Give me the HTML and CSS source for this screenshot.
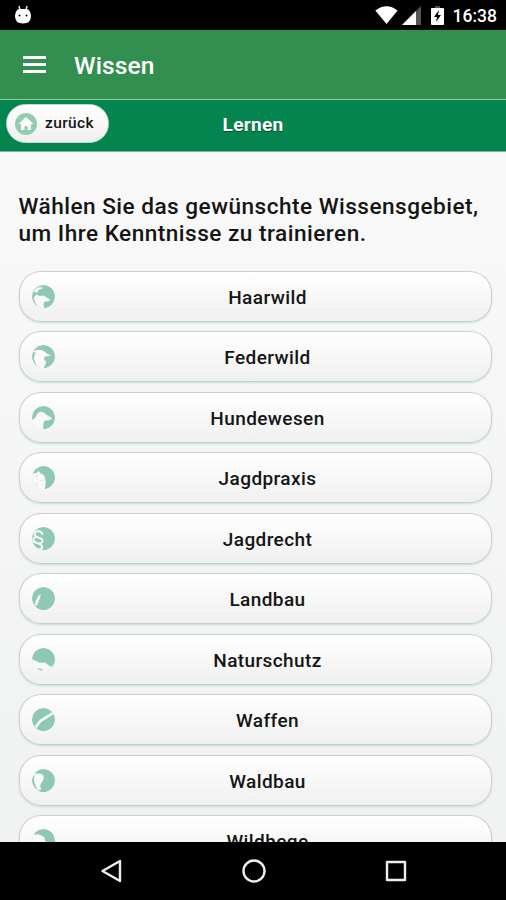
FILE: index.html
```html
<!DOCTYPE html>
<html lang="de">
  <head>
    <meta charset="UTF-8" />
    <meta name="viewport" content="width=device-width, initial-scale=1.0" />
    <title>Wissen - Lernen</title>
    <link rel="stylesheet" href="styles.css">
  </head>
  <body>
    <div class="statusbar">
      <svg class="android" width="18" height="20" viewBox="0 0 18 20">
        <path d="M5 1l1 4M13 1l-1 4" stroke="#ddd" stroke-width="1.6" />
        <path d="M2.500 6Q3 4 6 4h6q3 0 3.500 2Q17 8 17 11q0 7.500-8 7.500T1 11q0-3 1.500-5z" fill="#fff" />
        <circle cx="5.500" cy="10.500" r="1" />
        <circle cx="12.500" cy="10.500" r="1" />
      </svg>
      <div class="status-right">
        <svg class="wifi" width="23" height="18" viewBox="0 0 23 18">
          <path d="M0.300 4.500Q11.500-4 22.700 4.500L11.500 18z" fill="#fff" />
        </svg>
        <svg class="signal" width="19" height="19" viewBox="0 0 19 19">
          <path d="M19 0v19H0z" fill="#555" />
          <path d="M14 5v14H0z" fill="#fff" />
        </svg>
        <svg class="battery" width="13" height="19" viewBox="0 0 13 19">
          <path d="M4 0h5v2H4z" fill="#555" />
          <path d="M1 2h11q1 0 1 1v15q0 1-1 1H1q-1 0-1-1V3q0-1 1-1z" fill="#fff" />
          <path d="M8 4L3 11h3l-1 5 5-7H7z" />
        </svg>
        <span class="time">16:38</span>
      </div>
    </div>

    <header class="appbar">
      <div class="burger"><i></i><i></i><i></i></div>
      <h1>Wissen</h1>
    </header>

    <div class="subbar">
      <a class="back">
        <svg width="22" height="22" viewBox="0 0 22 22">
          <circle cx="11" cy="11" r="11" fill="#94cbb5" />
          <path d="M11 4l7.500 7H16v6h-3.500v-4h-3v4H6v-6H3.500z" fill="#fff" />
        </svg>
        <span>zurück</span>
      </a>
      <h2>Lernen</h2>
    </div>

    <main>
      <p class="intro">Wählen Sie das gewünschte Wissensgebiet,<br>um Ihre Kenntnisse zu trainieren.</p>
      <nav class="topics">
        <a class="topic">
          <svg viewBox="0 0 24 24">
            <circle cx="12" cy="12" r="12" />
            <path class="cut" d="M2.500 12L5 10l3 1.500 4-.500 4 2.500 3 2-2 1.500-4 .500q-2 3 0 6l-5 1-4-5-2-4z" />
            <path class="cut" d="M2 7l3 1 2-3 5-2-4-1-4 2z" />
          </svg>
          <span>Haarwild</span>
        </a>
        <a class="topic">
          <svg viewBox="0 0 24 24">
            <circle cx="12" cy="12" r="12" />
            <path class="cut" d="M0 7l4-1.500Q8 4 12 6q2 1.500 3 2.500l5 2.500-6 1q-2 .500-1 4 3 1 1 4l-2 4.500H8L4 20 2 14Q2 10 4 8z" />
          </svg>
          <span>Federwild</span>
        </a>
        <a class="topic">
          <svg viewBox="0 0 24 24">
            <circle cx="12" cy="12" r="12" />
            <path class="cut" d="M-1 15Q4 13 5 9q2-4 7-2.500l3 2.500 6 3.500-2 2-6 1q-2 3-1 9H4L-1 20z" />
          </svg>
          <span>Hundewesen</span>
        </a>
        <a class="topic">
          <svg viewBox="0 0 24 24">
            <circle cx="12" cy="12" r="12" />
            <path class="cut" d="M-1 8l6-1 2-2 2 3q3 0 4 3 2 5 1 9l-1 5H2L-1 18z" />
            <path d="M5 9v5M5 17v4M8 15h3" stroke="#c3e2d6" stroke-width=".8" />
          </svg>
          <span>Jagdpraxis</span>
        </a>
        <a class="topic">
          <svg viewBox="0 0 24 24">
            <circle cx="12" cy="12" r="12" />
            <path class="line" d="M11 8Q10 4 6 4.500 2 5 3 8.500q1 2 5 3 4 1.500 2.500 4.500-2 2-6 .500Q0 14 2 11.500 5 9 8.500 12M1 16q1-1 4 .500 6 1.500 5.500 5-1 3-6 1.500" />
          </svg>
          <span>Jagdrecht</span>
        </a>
        <a class="topic">
          <svg viewBox="0 0 24 24">
            <circle cx="12" cy="12" r="12" />
            <path class="cut" d="M9 7Q9 12 4.500 20L3 18Q4 11 9 7z" />
          </svg>
          <span>Landbau</span>
        </a>
        <a class="topic">
          <svg viewBox="0 0 24 24">
            <circle cx="12" cy="12" r="12" />
            <path class="cut" d="M-1 11l4 2L8 15.500l5.500-.500L18 18.500l6 2V25H-1z" />
            <path d="M5 21.500q3-1 7 1.500-4 1-7-1.500z" />
          </svg>
          <span>Naturschutz</span>
        </a>
        <a class="topic">
          <svg viewBox="0 0 24 24">
            <circle cx="12" cy="12" r="12" />
            <path class="cut" d="M3 19q4-7 10-10l9-5 1 2-9 6Q9 14 5 21z" />
          </svg>
          <span>Waffen</span>
        </a>
        <a class="topic">
          <svg viewBox="0 0 24 24">
            <circle cx="12" cy="12" r="12" />
            <path class="cut" d="M-1 7L2 3l3 2q5-1 7 2 1 4-2 7-3 4 0 7l-3 1-2 3-6-5z" />
            <path d="M0 11Q1 7 3 6q-2 6 1 12l2 4Q0 18 0 11z" />
          </svg>
          <span>Waldbau</span>
        </a>
        <a class="topic">
          <svg viewBox="0 0 24 24">
            <circle cx="12" cy="12" r="12" />
            <path class="cut" d="M-1 6l5-.500q5-.500 9 3.500l2 8-1 8H0z" />
          </svg>
          <span>Wildhege</span>
        </a>
      </nav>
    </main>

    <footer class="navbar">
      <svg width="24" height="26" viewBox="0 0 24 26">
        <path d="M2.500 13L20 3v20z" />
      </svg>
      <svg width="26" height="26" viewBox="0 0 26 26">
        <circle cx="13" cy="13" r="10.500" />
      </svg>
      <svg width="24" height="26" viewBox="0 0 24 26">
        <rect x="3" y="4" width="18" height="18" />
      </svg>
    </footer>
  </body>
</html>
```
FILE: styles.css
```css
* {
  box-sizing: border-box;
}
body {
  margin: 0;
  height: 900px;
  display: flex;
  flex-direction: column;
  overflow: hidden;
  font-family: Roboto, Arial, sans-serif;
  font-weight: 500;
  color: #151515;
}
svg {
  display: block;
  flex: none;
}

.statusbar {
  flex: none;
  height: 30px;
  padding: 0 9px 0 14px;
  display: flex;
  justify-content: space-between;
  align-items: center;
  background: #000;
  color: #fff;
}
.android {
  margin-top: -1px;
}
.status-right {
  display: flex;
  align-items: center;
}
.signal {
  margin-left: 4px;
}
.battery {
  margin: 0 9px 0 10px;
}
.time {
  font-size: 17.5px;
  line-height: 30px;
  padding-top: 2px;
}

.appbar {
  flex: none;
  height: 70px;
  padding-left: 23px;
  display: flex;
  align-items: center;
  background: #338f4f;
  border-bottom: 1px solid #8fc5a0;
  color: #fff;
}
.burger {
  width: 23px;
  height: 17px;
  margin: -1px 28px 0 0;
  display: flex;
  flex-direction: column;
  justify-content: space-between;
}
.burger i {
  height: 3px;
  background: #fff;
}
h1 {
  margin: 2px 0 0;
  font-size: 24.5px;
  font-weight: 500;
  letter-spacing: 0.1px;
}

.subbar {
  flex: none;
  height: 52px;
  padding: 0 6px;
  display: grid;
  grid-template-columns: 1fr auto 1fr;
  align-items: center;
  background: #04854f;
  border-bottom: 1px solid #77b99b;
}
.back {
  width: 103px;
  height: 39px;
  margin-top: -4px;
  padding-left: 8px;
  display: flex;
  align-items: center;
  gap: 8px;
  border-radius: 20px;
  background: linear-gradient(#fff, #efefef);
  border: 1px solid #c5ddd1;
  font-size: 15.5px;
  letter-spacing: 0.4px;
}
.back span {
  margin-top: -1px;
}
h2 {
  margin: -2px 0 0;
  font-size: 19px;
  font-weight: 700;
  letter-spacing: 0.3px;
  color: #fff;
  text-shadow: 0 1px 1px #024a2b;
}

main {
  flex: 1;
  min-height: 0;
  overflow: hidden;
  padding: 41px 14.5px 0 18.5px;
  background: linear-gradient(#f9f9f9, #f0f1f1);
}
.intro {
  margin: 0 0 23.6px;
  font-size: 22.6px;
  line-height: 27px;
  letter-spacing: 0.48px;
  white-space: nowrap;
}
.topics {
  display: flex;
  flex-direction: column;
  gap: 9.5px;
}
.topic {
  flex: none;
  height: 51px;
  padding: 0 12px;
  display: grid;
  grid-template-columns: 24px 1fr 0;
  align-items: center;
  border: 1px solid #cbd0ce;
  border-bottom-color: #bcd3c8;
  border-radius: 22px;
  background: linear-gradient(#fff, #f0f0f0);
  box-shadow: 0 1px 2px #c9ddd4;
  font-size: 19px;
  letter-spacing: 0.4px;
  text-align: center;
}
.topic span {
  padding: 2px 0 0 1px;
}
.topic svg {
  width: 23px;
  height: 23px;
  border-radius: 50%;
  fill: #90c9b3;
}
.topic .cut {
  fill: #f9f9f9;
}
.topic .line {
  fill: none;
  stroke: #f9f9f9;
  stroke-width: 2;
}

.navbar {
  flex: none;
  height: 58px;
  padding: 0 98px 0 100px;
  display: flex;
  justify-content: space-between;
  align-items: center;
  background: #000;
}
.navbar svg {
  fill: none;
  stroke: #eee;
  stroke-width: 2.4;
  stroke-linejoin: round;
}
```
